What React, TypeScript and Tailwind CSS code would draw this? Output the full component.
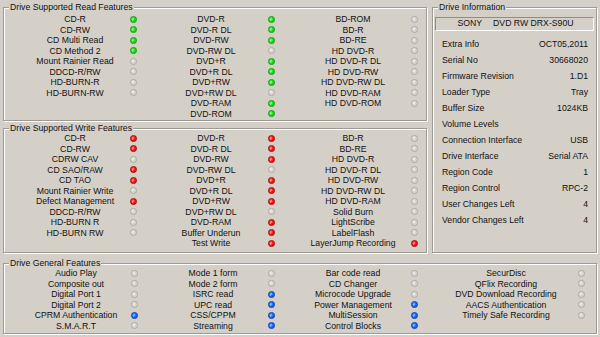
import React from "react";

type State = "g" | "r" | "b" | "o";
type Item = [string, State];

const readCols: Item[][] = [
  [
    ["CD-R", "g"],
    ["CD-RW", "g"],
    ["CD Multi Read", "g"],
    ["CD Method 2", "g"],
    ["Mount Rainier Read", "o"],
    ["DDCD-R/RW", "o"],
    ["HD-BURN-R", "o"],
    ["HD-BURN-RW", "o"],
  ],
  [
    ["DVD-R", "g"],
    ["DVD-R DL", "g"],
    ["DVD-RW", "g"],
    ["DVD-RW DL", "o"],
    ["DVD+R", "g"],
    ["DVD+R DL", "g"],
    ["DVD+RW", "g"],
    ["DVD+RW DL", "o"],
    ["DVD-RAM", "g"],
    ["DVD-ROM", "g"],
  ],
  [
    ["BD-ROM", "o"],
    ["BD-R", "o"],
    ["BD-RE", "o"],
    ["HD DVD-R", "o"],
    ["HD DVD-R DL", "o"],
    ["HD DVD-RW", "o"],
    ["HD DVD-RW DL", "o"],
    ["HD DVD-RAM", "o"],
    ["HD DVD-ROM", "o"],
  ],
];

const writeCols: Item[][] = [
  [
    ["CD-R", "r"],
    ["CD-RW", "r"],
    ["CDRW CAV", "o"],
    ["CD SAO/RAW", "r"],
    ["CD TAO", "r"],
    ["Mount Rainier Write", "o"],
    ["Defect Management", "r"],
    ["DDCD-R/RW", "o"],
    ["HD-BURN R", "o"],
    ["HD-BURN RW", "o"],
  ],
  [
    ["DVD-R", "r"],
    ["DVD-R DL", "r"],
    ["DVD-RW", "r"],
    ["DVD-RW DL", "o"],
    ["DVD+R", "r"],
    ["DVD+R DL", "r"],
    ["DVD+RW", "r"],
    ["DVD+RW DL", "o"],
    ["DVD-RAM", "r"],
    ["Buffer Underun", "r"],
    ["Test Write", "r"],
  ],
  [
    ["BD-R", "o"],
    ["BD-RE", "o"],
    ["HD DVD-R", "o"],
    ["HD DVD-R DL", "o"],
    ["HD DVD-RW", "o"],
    ["HD DVD-RW DL", "o"],
    ["HD DVD-RAM", "o"],
    ["Solid Burn", "o"],
    ["LightScribe", "o"],
    ["LabelFlash", "o"],
    ["LayerJump Recording", "r"],
  ],
];

const generalCols: Item[][] = [
  [
    ["Audio Play", "o"],
    ["Composite out", "o"],
    ["Digital Port 1", "o"],
    ["Digital Port 2", "o"],
    ["CPRM Authentication", "b"],
    ["S.M.A.R.T", "o"],
  ],
  [
    ["Mode 1 form", "o"],
    ["Mode 2 form", "o"],
    ["ISRC read", "b"],
    ["UPC read", "b"],
    ["CSS/CPPM", "b"],
    ["Streaming", "b"],
  ],
  [
    ["Bar code read", "o"],
    ["CD Changer", "o"],
    ["Microcode Upgrade", "o"],
    ["Power Management", "b"],
    ["MultiSession", "b"],
    ["Control Blocks", "b"],
  ],
  [
    ["SecurDisc", "o"],
    ["QFlix Recording", "o"],
    ["DVD Download Recording", "o"],
    ["AACS Authentication", "o"],
    ["Timely Safe Recording", "o"],
  ],
];

const driveInfo: [string, string][] = [
  ["Extra Info", "OCT05,2011"],
  ["Serial No", "30668020"],
  ["Firmware Revision", "1.D1"],
  ["Loader Type", "Tray"],
  ["Buffer Size", "1024KB"],
  ["Volume Levels", ""],
  ["Connection Interface", "USB"],
  ["Drive Interface", "Serial ATA"],
  ["Region Code", "1"],
  ["Region Control", "RPC-2"],
  ["User Changes Left", "4"],
  ["Vendor Changes Left", "4"],
];

const dotColors: Record<State, [string, string, string]> = {
  g: ["#7dff7d", "#14d814", "#0a8f0a"],
  r: ["#ff8a8a", "#f01212", "#980000"],
  b: ["#7fb0ff", "#1466f0", "#0a2f9e"],
  o: ["#f4f3f0", "#d6d3cd", "#9f9d98"],
};

function Dot({ s }: { s: State }) {
  const [hi, mid, edge] = dotColors[s];
  const id = `dot-${s}`;
  return (
    <svg width="7" height="7" viewBox="0 0 14 14" className="shrink-0">
      <defs>
        <radialGradient id={id} cx="40%" cy="40%" r="60%">
          <stop offset="0%" stopColor={hi} />
          <stop offset="55%" stopColor={mid} />
          <stop offset="100%" stopColor={mid} />
        </radialGradient>
      </defs>
      <circle cx="7" cy="7" r="6.2" fill={`url(#${id})`} stroke={edge} strokeWidth="1.4" />
      {s !== "o" && (
        <path d="M4.6 8.6 L6.4 7" stroke="#ffffff" strokeWidth="1.4" strokeLinecap="round" />
      )}
    </svg>
  );
}

function FeatureColumn({
  items,
  labelWidth,
  dotGap,
}: {
  items: Item[];
  labelWidth: string;
  dotGap: string;
}) {
  return (
    <div className="flex flex-col">
      {items.map(([label, s]) => (
        <div key={label} className="flex h-[10.5px] items-center">
          <span className={`${labelWidth} whitespace-nowrap text-center leading-[10.5px]`}>{label}</span>
          <span className={dotGap}>
            <Dot s={s} />
          </span>
        </div>
      ))}
    </div>
  );
}

function GroupBox({
  title,
  className,
  children,
}: {
  title: string;
  className: string;
  children: React.ReactNode;
}) {
  return (
    <div
      className={`relative border border-[#9c9a95] shadow-[inset_1px_1px_0_#ffffff,1px_1px_0_#ffffff] ${className}`}
    >
      <span className="absolute -top-[5px] left-[5px] bg-[#d4d0c8] px-[1px] leading-[9px] whitespace-nowrap">
        {title}
      </span>
      {children}
    </div>
  );
}

export default function App() {
  return (
    <div className="h-[337px] w-[600px] overflow-hidden bg-[#d4d0c8] pt-[7px] font-['Liberation_Sans',Arial,sans-serif] text-[8.7px] text-[#111]">
      <div className="ml-[3px] flex h-[246px] w-[594px] gap-[5px]">
        <div className="flex w-[424px] flex-col gap-[7px]">
          <GroupBox title="Drive Supported Read Features" className="h-[114px] pt-[6px] pl-[18px]">
            <div className="grid grid-cols-[136px_142px_auto]">
              <FeatureColumn items={readCols[0]} labelWidth="w-[106px]" dotGap="ml-[1.5px]" />
              <FeatureColumn items={readCols[1]} labelWidth="w-[106px]" dotGap="ml-[3.5px]" />
              <FeatureColumn items={readCols[2]} labelWidth="w-[106px]" dotGap="ml-[4.5px]" />
            </div>
          </GroupBox>
          <GroupBox title="Drive Supported Write Features" className="flex-1 pt-[4px] pl-[18px]">
            <div className="grid grid-cols-[136px_142px_auto]">
              <FeatureColumn items={writeCols[0]} labelWidth="w-[106px]" dotGap="ml-[1.5px]" />
              <FeatureColumn items={writeCols[1]} labelWidth="w-[106px]" dotGap="ml-[3.5px]" />
              <FeatureColumn items={writeCols[2]} labelWidth="w-[106px]" dotGap="ml-[4.5px]" />
            </div>
          </GroupBox>
        </div>
        <GroupBox title="Drive Information" className="flex w-[165px] flex-col px-[2px] pt-[9px]">
          <div className="flex h-[14px] items-center justify-center gap-[11px] border border-t-[#8f8d88] border-l-[#8f8d88] border-r-[#ffffff] border-b-[#ffffff] pl-[2px]">
            <span>SONY</span>
            <span>DVD RW DRX-S90U</span>
          </div>
          <div className="mt-[5px] flex flex-col pr-[6px] pl-[7px]">
            {driveInfo.map(([label, value]) => (
              <div key={label} className="flex h-[16.06px] items-center justify-between">
                <span>{label}</span>
                <span>{value}</span>
              </div>
            ))}
          </div>
        </GroupBox>
      </div>
      <GroupBox title="Drive General Features" className="mt-[10px] ml-[3px] h-[71px] w-[594px] pt-[4px] pl-[19px]">
        <div className="grid grid-cols-[137px_140px_146px_auto]">
          <FeatureColumn items={generalCols[0]} labelWidth="w-[106px]" dotGap="ml-[1.5px]" />
          <FeatureColumn items={generalCols[1]} labelWidth="w-[106px]" dotGap="ml-[1.5px]" />
          <FeatureColumn items={generalCols[2]} labelWidth="w-[106px]" dotGap="ml-[4.5px]" />
          <FeatureColumn items={generalCols[3]} labelWidth="w-[120px]" dotGap="ml-[11.5px]" />
        </div>
      </GroupBox>
    </div>
  );
}
